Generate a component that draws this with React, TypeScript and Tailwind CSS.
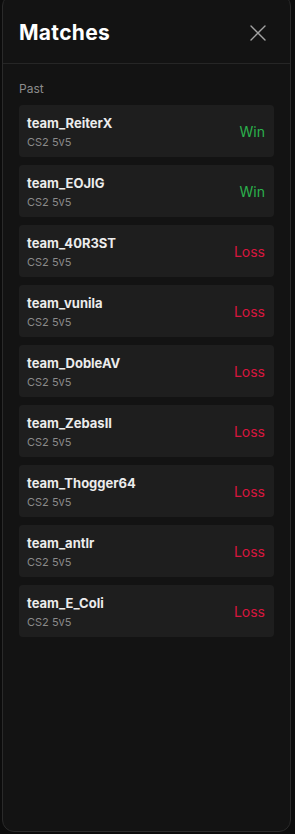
import React from "react";

const matches: { name: string; result: "Win" | "Loss" }[] = [
  { name: "team_ReiterX", result: "Win" },
  { name: "team_EOJIG", result: "Win" },
  { name: "team_40R3ST", result: "Loss" },
  { name: "team_vunila", result: "Loss" },
  { name: "team_DobleAV", result: "Loss" },
  { name: "team_ZebasII", result: "Loss" },
  { name: "team_Thogger64", result: "Loss" },
  { name: "team_antlr", result: "Loss" },
  { name: "team_E_Coli", result: "Loss" },
];

export default function App() {
  return (
    <div
      className="w-[295px] h-[834px] bg-[#0c0c0c] overflow-hidden pl-[2px]"
      style={{ fontFamily: "Inter, 'DejaVu Sans', sans-serif" }}
    >
      <div className="-mt-[6px] w-[289px] h-[838px] rounded-[12px] border border-[#2a2a2a] bg-[#131313] flex flex-col">
        <div className="flex items-center justify-between pl-[16px] pr-[24px] pt-[25px] pb-[17px] border-b border-[#262626]">
          <h1 className="text-[21px] font-bold text-white tracking-[0.3px] leading-[26px]">Matches</h1>
          <svg width="16" height="16" viewBox="0 0 16 16" fill="none" stroke="#a3a3a3" strokeWidth="1.4" strokeLinecap="round">
            <path d="M1 1 L15 15 M15 1 L1 15" />
          </svg>
        </div>
        <div className="px-[16px] pt-[18px]">
          <div className="text-[12px] text-[#8c8c8c] leading-[14px] mb-[9px]">Past</div>
          <div className="flex flex-col gap-[8px]">
            {matches.map((m) => (
              <div
                key={m.name}
                className="h-[52px] rounded-[4px] bg-[#1e1e1e] flex items-center justify-between pl-[8px] pr-[9px]"
              >
                <div className="flex flex-col gap-[2px] mt-[2px]">
                  <span className="text-[13px] font-bold text-[#ececec] leading-[18px]">{m.name}</span>
                  <span className="text-[11px] text-[#8a8a8a] leading-[16px]">CS2 5v5</span>
                </div>
                <span
                  className={
                    m.result === "Win"
                      ? "text-[14px] text-[#2bb24c]"
                      : "text-[14px] text-[#d8163e]"
                  }
                >
                  {m.result}
                </span>
              </div>
            ))}
          </div>
        </div>
      </div>
    </div>
  );
}
